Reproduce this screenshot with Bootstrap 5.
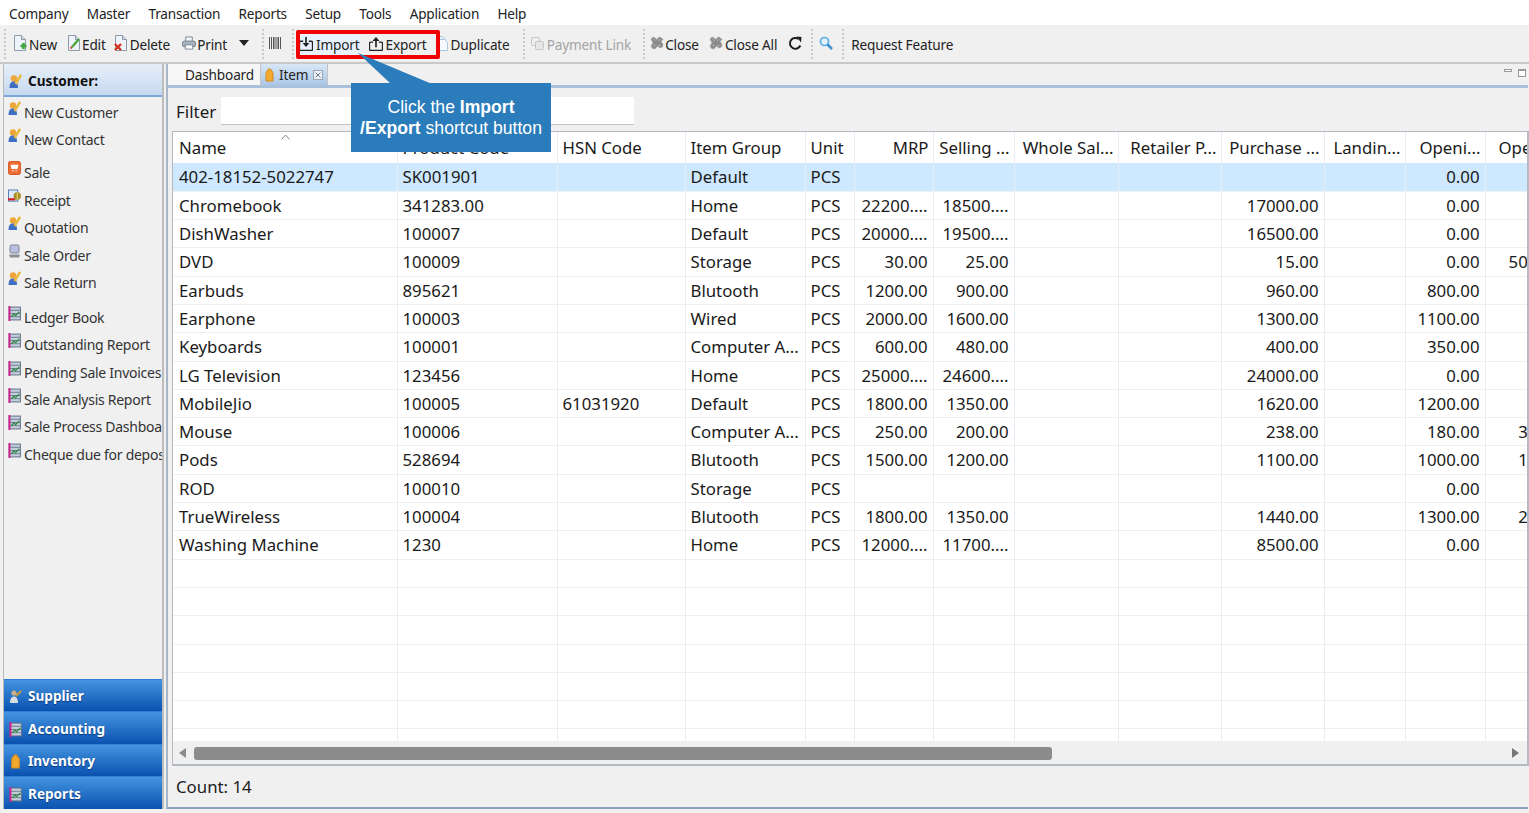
<!DOCTYPE html>
<html lang="en"><head><meta charset="utf-8"><title>Item</title>
<link href="https://cdn.jsdelivr.net/npm/bootstrap@5.3.0/dist/css/bootstrap.min.css" rel="stylesheet">
<style>
html,body{height:813px;overflow:hidden}
body{background:#f0f0f0;font-family:"Noto Sans","Open Sans",sans-serif;color:#1c1c1c;position:relative;width:1529px}
.menu-bar{height:25px;background:#fff;padding-left:9px;gap:18.300px;font-size:13.600px;letter-spacing:-.2px;line-height:27px;color:#222}
.tool-bar{height:39px;border-bottom:2px solid #c8c8c8;font-size:13.600px;letter-spacing:-.15px;color:#222;padding-left:4px;padding-top:2px}
.tb-sep{width:0;height:30px;border-left:2px dotted #c9c9c9;flex:none;margin-top:-2px}
.tb-item{display:flex;align-items:center;gap:2px;flex:none;white-space:nowrap;line-height:20px}
.tb-wide{gap:3px}
.tb-tight{gap:1px}
.tb-item svg,.tool-bar svg{flex:none;margin-top:-3px}
.tool-bar .tb-io svg{margin-top:-1px}
.tb-off{color:#a4a4a4}
.work{height:745px}
.side{width:161px;margin-left:3px;border-left:1px solid #b9b9b9;border-right:2px solid #bdbdbd;flex:none;overflow:hidden}
.side-head{height:33px;flex:none;background:linear-gradient(#e6eff9,#c6d9f0);border-bottom:2px solid #7ba6dc;font-weight:700;font-size:13.600px;color:#111;padding-left:5px;padding-top:3px;gap:6px}
.side-list{flex:1 1 auto;padding-top:1px;font-size:14px;color:#333;overflow:hidden}
.side-row{height:27.4px;display:flex;white-space:nowrap;padding-left:4px;gap:3px;line-height:29px;letter-spacing:-.27px}
.side-row svg{flex:none;margin-top:3px}
.side-gap1{height:5.6px}.side-gap2{height:7.6px}
.acc-btn{height:32.6px;flex:none;background:linear-gradient(#4494e0,#0a52b0);border-top:1px solid #2f7fd4;color:#fff;font-weight:700;font-size:13.600px;padding-left:5px;padding-top:2px;gap:6px;text-shadow:0 1px 1px #0a3a7c}
.main{width:1362px;margin-left:2px;border-left:2px solid #a8b7c8;border-bottom:2px solid #8ba4bf;height:745px}
.tab-strip{height:24px;border-bottom:3px solid #a8c0da;font-size:13.600px;letter-spacing:-.15px;flex:none;position:relative}
.tab-one{width:92px;height:21px;background:#f6f6f6;padding-left:17px;color:#222;line-height:22px}
.tab-two{width:68px;height:21px;background:linear-gradient(#d9e7f6,#aac6e6);padding-left:4px;gap:5px;color:#222;border-left:1px solid #c3c3c3;border-right:1px solid #c3c3c3;line-height:23px}
.win-btns{gap:6px;padding-right:2px;padding-top:5px}
.win-min{width:8px;height:3px;border:1px solid #9a9a9a;background:#fff}
.win-max{width:8px;height:8px;border:1px solid #9a9a9a;background:#fff;border-top-width:2px}
.filter-row{height:43px;flex:none;padding:9px 0 0 8px;font-size:17px;gap:5px}
.filter-row>span{line-height:29px}
.filter-row .form-control{width:413px;height:28px;border:0;border-bottom:1px solid #c2c2c2;border-radius:0;padding:0;background:#fff;box-shadow:none}
.grid-box{width:1357px;height:635px;margin-left:4px;border:1px solid #b4bac2;border-width:1px 2px 2px 1px;background:#fff;flex:none;overflow:hidden}
.grid-clip{height:609px;overflow:hidden;position:relative}
.item-grid.table{table-layout:fixed;width:1384px;margin:0;font-size:16.800px;color:#1a1a1a}
.item-grid.table>:not(caption)>*>*{padding:0 5px;height:28.3px;line-height:27px;border-bottom:1px solid #f0f0f0;border-right:1px solid #e9ecf4;white-space:nowrap;overflow:hidden;background:transparent;box-shadow:none;color:inherit;font-weight:400}
.item-grid.table>thead>tr>th{height:31px;line-height:27px;padding-top:2px;vertical-align:top;border-bottom:0;padding-right:4px}
.item-grid.table>tbody>tr.row-sel>td{background:#cde8ff}
.item-grid .num{text-align:right}
.item-grid.table>tbody>tr>td:first-child,.item-grid.table>thead>tr>th:first-child{padding-left:6px}
.th-name{position:relative}
.sort-mark{position:absolute;left:108px;top:2px;width:9px;height:6px}
.scroll-bar{height:24px;background:#f0f0f0;padding:0 8px 0 6px}
.scroll-thumb{width:858px;height:13px;background:#8c8c8c;border-radius:3px;margin-left:7px}
.count-row{height:43px;flex:none;padding:0 0 2px 8px;font-size:16.800px}
.call-wrap{position:absolute;left:296px;top:30px;width:256px;height:123px;pointer-events:none}
.call-red{position:absolute;left:0;top:0;width:144px;height:29px;border:4px solid #f00000;border-radius:2px}
.call-tail{position:absolute;left:0;top:0}
.call-box{position:absolute;left:55px;top:53px;width:200px;height:69px;background:#2a7cba;color:#fff;font-family:"Liberation Sans",sans-serif;font-size:17.600px;line-height:21px;text-align:center;padding-top:14px}
.imp-bg{background:#e6f1fb;height:21px}
.tm-5{margin-left:5px}.tm-6{margin-left:6px}.tm-7{margin-left:7px}.tm-8{margin-left:8px}.tm-9{margin-left:9px}.tm-10{margin-left:10px}.tm-11{margin-left:11px}.tm-12{margin-left:12px}.tm-13{margin-left:13px}
.item-grid.table>thead>tr>th.th-last{padding-left:13px}
</style></head>
<body>
<svg width="0" height="0" class="position-absolute">
<defs>
<symbol id="i-doc" viewBox="0 0 14 16"><path d="M1.500 .5h7l4 4v11h-11z" fill="#eef3fa" stroke="#8d9aaa"/><path d="M8.500 .5v4h4" fill="#cfd9e6" stroke="#8d9aaa"/></symbol>
<symbol id="i-new" viewBox="0 0 14 16"><use href="#i-doc"/><path d="M7.500 11h6M10.500 8v6" stroke="#3ba63b" stroke-width="2.600"/></symbol>
<symbol id="i-edit" viewBox="0 0 14 16"><use href="#i-doc"/><path d="M5 12l7-8" stroke="#48a83e" stroke-width="2.400"/><path d="M3.500 13.500l1.500-1.500" stroke="#c9503c" stroke-width="2"/></symbol>
<symbol id="i-del" viewBox="0 0 14 16"><use href="#i-doc"/><path d="M1 9l6 6M7 9l-6 6" stroke="#d5321e" stroke-width="2.300"/></symbol>
<symbol id="i-print" viewBox="0 0 15 15"><path d="M4 6V1h7v5" fill="#f4f6f9" stroke="#7b8796"/><rect x=".5" y="5.500" width="14" height="6" rx="2" fill="#a9b4c2" stroke="#6f7b89"/><rect x="3.500" y="9.500" width="8" height="4.500" fill="#fff" stroke="#7b8796"/></symbol>
<symbol id="i-bar" viewBox="0 0 12 12"><path d="M.5 0v12M2.500 0v12M4.500 0v12M6 0v12M8 0v12M9.500 0v12M11.500 0v12" stroke="#555" stroke-width="1"/></symbol>
<symbol id="i-imp" viewBox="0 0 15 15"><path d="M4.500 4.500H2a1.500 1.500 0 0 0-1.500 1.500v7A1.500 1.500 0 0 0 2 14.500h11a1.500 1.500 0 0 0 1.500-1.500V6A1.500 1.500 0 0 0 13 4.500h-2.500" fill="none" stroke="#222" stroke-width="1.500"/><path d="M7.500 0v9" stroke="#222" stroke-width="1.800"/><path d="M3.800 6.500l3.700 4.300 3.700-4.300z" fill="#222"/></symbol>
<symbol id="i-exp" viewBox="0 0 15 15"><path d="M4.500 5.500H2A1.500 1.500 0 0 0 .5 7v6A1.500 1.500 0 0 0 2 14.500h11a1.500 1.500 0 0 0 1.500-1.500V7A1.500 1.500 0 0 0 13 5.500h-2.500" fill="none" stroke="#222" stroke-width="1.500"/><path d="M7.500 11V3" stroke="#222" stroke-width="1.800"/><path d="M3.800 4.300L7.500 0l3.700 4.300z" fill="#222"/></symbol>
<symbol id="i-dup" viewBox="0 0 12 15"><path d="M.5 .5h6l3 3v9h-9z" fill="#eaf2fb" stroke="#a9c6e6"/><path d="M3.500 3.500h5l3 3v8h-8z" fill="#f6f9fd" stroke="#a9c6e6"/></symbol>
<symbol id="i-pay" viewBox="0 0 13 13"><rect x=".5" y=".5" width="8" height="8" rx="1" fill="#eee" stroke="#c4c4c4"/><rect x="4.500" y="4.500" width="8" height="8" rx="1" fill="#e6e6e6" stroke="#c4c4c4"/></symbol>
<symbol id="i-close" viewBox="0 0 14 14"><path d="M1 3l2-2 2 1 2 1.500L9 1l2 .5 2 2-2 2 2 2.500-.5 3-2.500 1-2.500-2L5 13l-2.500-.5L1 10l2-3z" fill="#8b8b8b" stroke="#a8a8a8" stroke-width=".8"/><path d="M4 3.500l1 1M9 9l1 1M9.500 3.500l-1 1M4 10l1-1" stroke="#d8d8d8"/></symbol>
<symbol id="i-ref" viewBox="0 0 15 15"><path d="M12.300 9.500A5.400 5.400 0 1 1 10.500 3" fill="none" stroke="#1c1c1c" stroke-width="2"/><path d="M8.500 .5l5 .5-.5 5.500z" fill="#1c1c1c"/></symbol>
<symbol id="i-find" viewBox="0 0 14 14"><circle cx="5.500" cy="5.500" r="4" fill="#e3f3fd" stroke="#5aaee6" stroke-width="1.700"/><path d="M8.500 8.500l4.500 4.500" stroke="#3f8fd0" stroke-width="2.500"/></symbol>
<symbol id="i-man" viewBox="0 0 13 15"><circle cx="5" cy="4.500" r="3.200" fill="#eea63a"/><path d="M.5 14c0-5 1.700-6.500 4.500-6.500S9 10 9 14z" fill="#3f6fc4"/><path d="M6.500 10L12 1" stroke="#e8b83c" stroke-width="2.400"/></symbol>
<symbol id="i-sale" viewBox="0 0 12 14"><rect x=".5" y=".5" width="11" height="12" rx="2" fill="#ee7035" stroke="#d65a28"/><path d="M3 4h6l-.6 3H3.600zM4 9h1M7 9h1" fill="#fff" stroke="#fff"/></symbol>
<symbol id="i-rec" viewBox="0 0 14 15"><rect x=".5" y=".5" width="10" height="12" fill="#dfe9f7" stroke="#4a78b8"/><path d="M0 10.500h8" stroke="#d3262a" stroke-width="2.400"/><circle cx="10" cy="7" r="4" fill="#a98f2a"/><path d="M10 3.500v7" stroke="#f7e17a"/></symbol>
<symbol id="i-ord" viewBox="0 0 13 15"><rect x="2" y="1" width="9" height="8" rx="1.500" fill="#b9bfe0" stroke="#7d8290"/><path d="M1 10.500h11l-1 3H2z" fill="#8a8f96"/></symbol>
<symbol id="i-chart" viewBox="0 0 12 14"><rect x="1" y="1" width="10.500" height="12" fill="#c4cfdb" stroke="#5d6f85" stroke-width=".9"/><path d="M1 4h10.500M1 7h10.500M1 10h10.500" stroke="#6a7c93" stroke-width=".9"/><path d="M1.300 0v14" stroke="#d01e8c" stroke-width="1.800"/><path d="M3 10l2.500-2.500L7 9l3.500-3.500" fill="none" stroke="#2a8a35" stroke-width="1.200"/></symbol>
<symbol id="i-tag" viewBox="0 0 9 14"><path d="M1 4.500L3.500 1h2L8 4.500V13H1z" fill="#f2a92e" stroke="#d68a1c"/></symbol>
<symbol id="i-sup" viewBox="0 0 13 15"><circle cx="5" cy="4" r="2.600" fill="#c9b08a"/><path d="M1 14c0-4 1.500-6.500 4-6.500s4 2.500 4 6.500z" fill="#d9dde2"/><path d="M7 7l5-5" stroke="#c59a3c" stroke-width="2.200"/></symbol>
</defs></svg>

<nav class="menu-bar d-flex"><span>Company</span><span>Master</span><span>Transaction</span><span>Reports</span><span>Setup</span><span>Tools</span><span>Application</span><span>Help</span></nav>

<div class="tool-bar d-flex align-items-center">
<span class="tb-sep"></span>
<span class="tb-item tm-7"><svg width="14" height="16"><use href="#i-new"/></svg>New</span>
<span class="tb-item tm-10 tb-tight"><svg width="14" height="16"><use href="#i-edit"/></svg>Edit</span>
<span class="tb-item tm-8"><svg width="14" height="16"><use href="#i-del"/></svg>Delete</span>
<span class="tb-item tm-12 tb-tight"><svg width="14" height="14"><use href="#i-print"/></svg>Print</span>
<svg class="tm-12" width="10" height="6"><path d="M0 0h10L5 6z" fill="#222"/></svg>
<span class="tb-sep tm-13"></span>
<svg class="tm-5" width="12" height="12"><use href="#i-bar"/></svg>
<span class="tb-sep tm-11"></span>
<span class="tb-item tb-io imp-bg tm-5 tb-wide"><svg width="14" height="14"><use href="#i-imp"/></svg>Import</span>
<span class="tb-item tb-io tm-9 tb-wide"><svg width="14" height="14"><use href="#i-exp"/></svg>Export</span>
<span class="tb-item tm-9 tb-wide"><svg width="12" height="15"><use href="#i-dup"/></svg>Duplicate</span>
<span class="tb-sep tm-13"></span>
<span class="tb-item tb-off tm-6 tb-wide"><svg width="13" height="13"><use href="#i-pay"/></svg>Payment Link</span>
<span class="tb-sep tm-12"></span>
<span class="tb-item tm-5 tb-tight"><svg width="14" height="14"><use href="#i-close"/></svg>Close</span>
<span class="tb-item tm-10"><svg width="14" height="14"><use href="#i-close"/></svg>Close All</span>
<svg class="tm-11" width="15" height="15"><use href="#i-ref"/></svg>
<span class="tb-sep tm-8"></span>
<svg class="tm-6" width="14" height="14"><use href="#i-find"/></svg>
<span class="tb-sep tm-9"></span>
<span class="tb-item tm-7">Request Feature</span>
</div>

<div class="work d-flex">
<aside class="side d-flex flex-column">
<div class="side-head d-flex align-items-center"><svg width="13" height="15"><use href="#i-man"/></svg>Customer:</div>
<div class="side-list">
<div class="side-row"><svg width="13" height="15"><use href="#i-man"/></svg>New Customer</div>
<div class="side-row"><svg width="13" height="15"><use href="#i-man"/></svg>New Contact</div>
<div class="side-gap1"></div>
<div class="side-row"><svg width="13" height="15"><use href="#i-sale"/></svg>Sale</div>
<div class="side-row"><svg width="13" height="15"><use href="#i-rec"/></svg>Receipt</div>
<div class="side-row"><svg width="13" height="15"><use href="#i-man"/></svg>Quotation</div>
<div class="side-row"><svg width="13" height="15"><use href="#i-ord"/></svg>Sale Order</div>
<div class="side-row"><svg width="13" height="15"><use href="#i-man"/></svg>Sale Return</div>
<div class="side-gap2"></div>
<div class="side-row"><svg width="13" height="15"><use href="#i-chart"/></svg>Ledger Book</div>
<div class="side-row"><svg width="13" height="15"><use href="#i-chart"/></svg>Outstanding Report</div>
<div class="side-row"><svg width="13" height="15"><use href="#i-chart"/></svg>Pending Sale Invoices</div>
<div class="side-row"><svg width="13" height="15"><use href="#i-chart"/></svg>Sale Analysis Report</div>
<div class="side-row"><svg width="13" height="15"><use href="#i-chart"/></svg>Sale Process Dashboard</div>
<div class="side-row"><svg width="13" height="15"><use href="#i-chart"/></svg>Cheque due for deposit</div>
</div>
<div class="acc-btn d-flex align-items-center"><svg width="13" height="15"><use href="#i-sup"/></svg>Supplier</div>
<div class="acc-btn d-flex align-items-center"><svg width="13" height="15"><use href="#i-chart"/></svg>Accounting</div>
<div class="acc-btn d-flex align-items-center"><svg width="13" height="15"><use href="#i-tag"/></svg>Inventory</div>
<div class="acc-btn d-flex align-items-center"><svg width="13" height="15"><use href="#i-chart"/></svg>Reports</div>
</aside>

<main class="main d-flex flex-column">
<div class="tab-strip d-flex align-items-start">
<div class="tab-one">Dashboard</div>
<div class="tab-two d-flex align-items-center"><svg width="9" height="14"><use href="#i-tag"/></svg>Item<svg width="10" height="10"><rect x=".5" y=".5" width="9" height="9" fill="#eef2f7" stroke="#9aa6b4"/><path d="M2.500 2.500l5 5M7.500 2.500l-5 5" stroke="#6f7a87"/></svg></div>
<div class="win-btns d-flex ms-auto align-items-start"><span class="win-min"></span><span class="win-max"></span></div>
</div>
<div class="filter-row d-flex align-items-start"><span>Filter</span><input class="form-control" type="text" aria-label="Filter"></div>
<div class="grid-box">
<div class="grid-clip">
<table class="table item-grid">
<colgroup><col style="width:224px"><col style="width:160px"><col style="width:128px"><col style="width:120px"><col style="width:49px"><col style="width:79px"><col style="width:81px"><col style="width:104px"><col style="width:103px"><col style="width:103px"><col style="width:81px"><col style="width:80px"><col style="width:72px"></colgroup>
<thead><tr><th class="th-name">Name<svg class="sort-mark"><path d="M.5 5.500L4.500 1l4 4.500" fill="none" stroke="#8a8a8a"/></svg></th><th>Product Code</th><th>HSN Code</th><th>Item Group</th><th>Unit</th><th class="num">MRP</th><th class="num">Selling ...</th><th class="num">Whole Sal...</th><th class="num">Retailer P...</th><th class="num">Purchase ...</th><th class="num">Landin...</th><th class="num">Openi...</th><th class="th-last">Ope</th></tr></thead>
<tbody>
<tr class="row-sel"><td>402-18152-5022747</td><td>SK001901</td><td></td><td>Default</td><td>PCS</td><td class="num"></td><td class="num"></td><td></td><td></td><td class="num"></td><td class="num"></td><td class="num">0.00</td><td class="num"></td></tr>
<tr><td>Chromebook</td><td>341283.00</td><td></td><td>Home</td><td>PCS</td><td class="num">22200....</td><td class="num">18500....</td><td></td><td></td><td class="num">17000.00</td><td class="num"></td><td class="num">0.00</td><td class="num"></td></tr>
<tr><td>DishWasher</td><td>100007</td><td></td><td>Default</td><td>PCS</td><td class="num">20000....</td><td class="num">19500....</td><td></td><td></td><td class="num">16500.00</td><td class="num"></td><td class="num">0.00</td><td class="num"></td></tr>
<tr><td>DVD</td><td>100009</td><td></td><td>Storage</td><td>PCS</td><td class="num">30.00</td><td class="num">25.00</td><td></td><td></td><td class="num">15.00</td><td class="num"></td><td class="num">0.00</td><td class="num">50.00</td></tr>
<tr><td>Earbuds</td><td>895621</td><td></td><td>Blutooth</td><td>PCS</td><td class="num">1200.00</td><td class="num">900.00</td><td></td><td></td><td class="num">960.00</td><td class="num"></td><td class="num">800.00</td><td class="num"></td></tr>
<tr><td>Earphone</td><td>100003</td><td></td><td>Wired</td><td>PCS</td><td class="num">2000.00</td><td class="num">1600.00</td><td></td><td></td><td class="num">1300.00</td><td class="num"></td><td class="num">1100.00</td><td class="num"></td></tr>
<tr><td>Keyboards</td><td>100001</td><td></td><td>Computer A...</td><td>PCS</td><td class="num">600.00</td><td class="num">480.00</td><td></td><td></td><td class="num">400.00</td><td class="num"></td><td class="num">350.00</td><td class="num"></td></tr>
<tr><td>LG Television</td><td>123456</td><td></td><td>Home</td><td>PCS</td><td class="num">25000....</td><td class="num">24600....</td><td></td><td></td><td class="num">24000.00</td><td class="num"></td><td class="num">0.00</td><td class="num"></td></tr>
<tr><td>MobileJio</td><td>100005</td><td>61031920</td><td>Default</td><td>PCS</td><td class="num">1800.00</td><td class="num">1350.00</td><td></td><td></td><td class="num">1620.00</td><td class="num"></td><td class="num">1200.00</td><td class="num"></td></tr>
<tr><td>Mouse</td><td>100006</td><td></td><td>Computer A...</td><td>PCS</td><td class="num">250.00</td><td class="num">200.00</td><td></td><td></td><td class="num">238.00</td><td class="num"></td><td class="num">180.00</td><td class="num">3.00</td></tr>
<tr><td>Pods</td><td>528694</td><td></td><td>Blutooth</td><td>PCS</td><td class="num">1500.00</td><td class="num">1200.00</td><td></td><td></td><td class="num">1100.00</td><td class="num"></td><td class="num">1000.00</td><td class="num">1.00</td></tr>
<tr><td>ROD</td><td>100010</td><td></td><td>Storage</td><td>PCS</td><td class="num"></td><td class="num"></td><td></td><td></td><td class="num"></td><td class="num"></td><td class="num">0.00</td><td class="num"></td></tr>
<tr><td>TrueWireless</td><td>100004</td><td></td><td>Blutooth</td><td>PCS</td><td class="num">1800.00</td><td class="num">1350.00</td><td></td><td></td><td class="num">1440.00</td><td class="num"></td><td class="num">1300.00</td><td class="num">2.00</td></tr>
<tr><td>Washing Machine</td><td>1230</td><td></td><td>Home</td><td>PCS</td><td class="num">12000....</td><td class="num">11700....</td><td></td><td></td><td class="num">8500.00</td><td class="num"></td><td class="num">0.00</td><td class="num"></td></tr>
<tr><td></td><td></td><td></td><td></td><td></td><td></td><td></td><td></td><td></td><td></td><td></td><td></td><td></td></tr>
<tr><td></td><td></td><td></td><td></td><td></td><td></td><td></td><td></td><td></td><td></td><td></td><td></td><td></td></tr>
<tr><td></td><td></td><td></td><td></td><td></td><td></td><td></td><td></td><td></td><td></td><td></td><td></td><td></td></tr>
<tr><td></td><td></td><td></td><td></td><td></td><td></td><td></td><td></td><td></td><td></td><td></td><td></td><td></td></tr>
<tr><td></td><td></td><td></td><td></td><td></td><td></td><td></td><td></td><td></td><td></td><td></td><td></td><td></td></tr>
<tr><td></td><td></td><td></td><td></td><td></td><td></td><td></td><td></td><td></td><td></td><td></td><td></td><td></td></tr>
<tr><td></td><td></td><td></td><td></td><td></td><td></td><td></td><td></td><td></td><td></td><td></td><td></td><td></td></tr>
</tbody></table>
</div>
<div class="scroll-bar d-flex align-items-center">
<svg width="8" height="10"><path d="M7 0v10L0 5z" fill="#8a8a8a"/></svg>
<div class="scroll-thumb"></div>
<svg class="ms-auto" width="8" height="10"><path d="M1 0v10l7-5z" fill="#777"/></svg>
</div>
</div>
<div class="count-row d-flex align-items-center">Count: 14</div>
</main>
</div>

<div class="call-wrap">
<div class="call-red"></div>
<svg class="call-tail" width="256" height="60"><path d="M62 23L95 54H136z" fill="#2a7cba"/></svg>
<div class="call-box">Click the <b>Import<br>/Export</b> shortcut button</div>
</div>
</body></html>
